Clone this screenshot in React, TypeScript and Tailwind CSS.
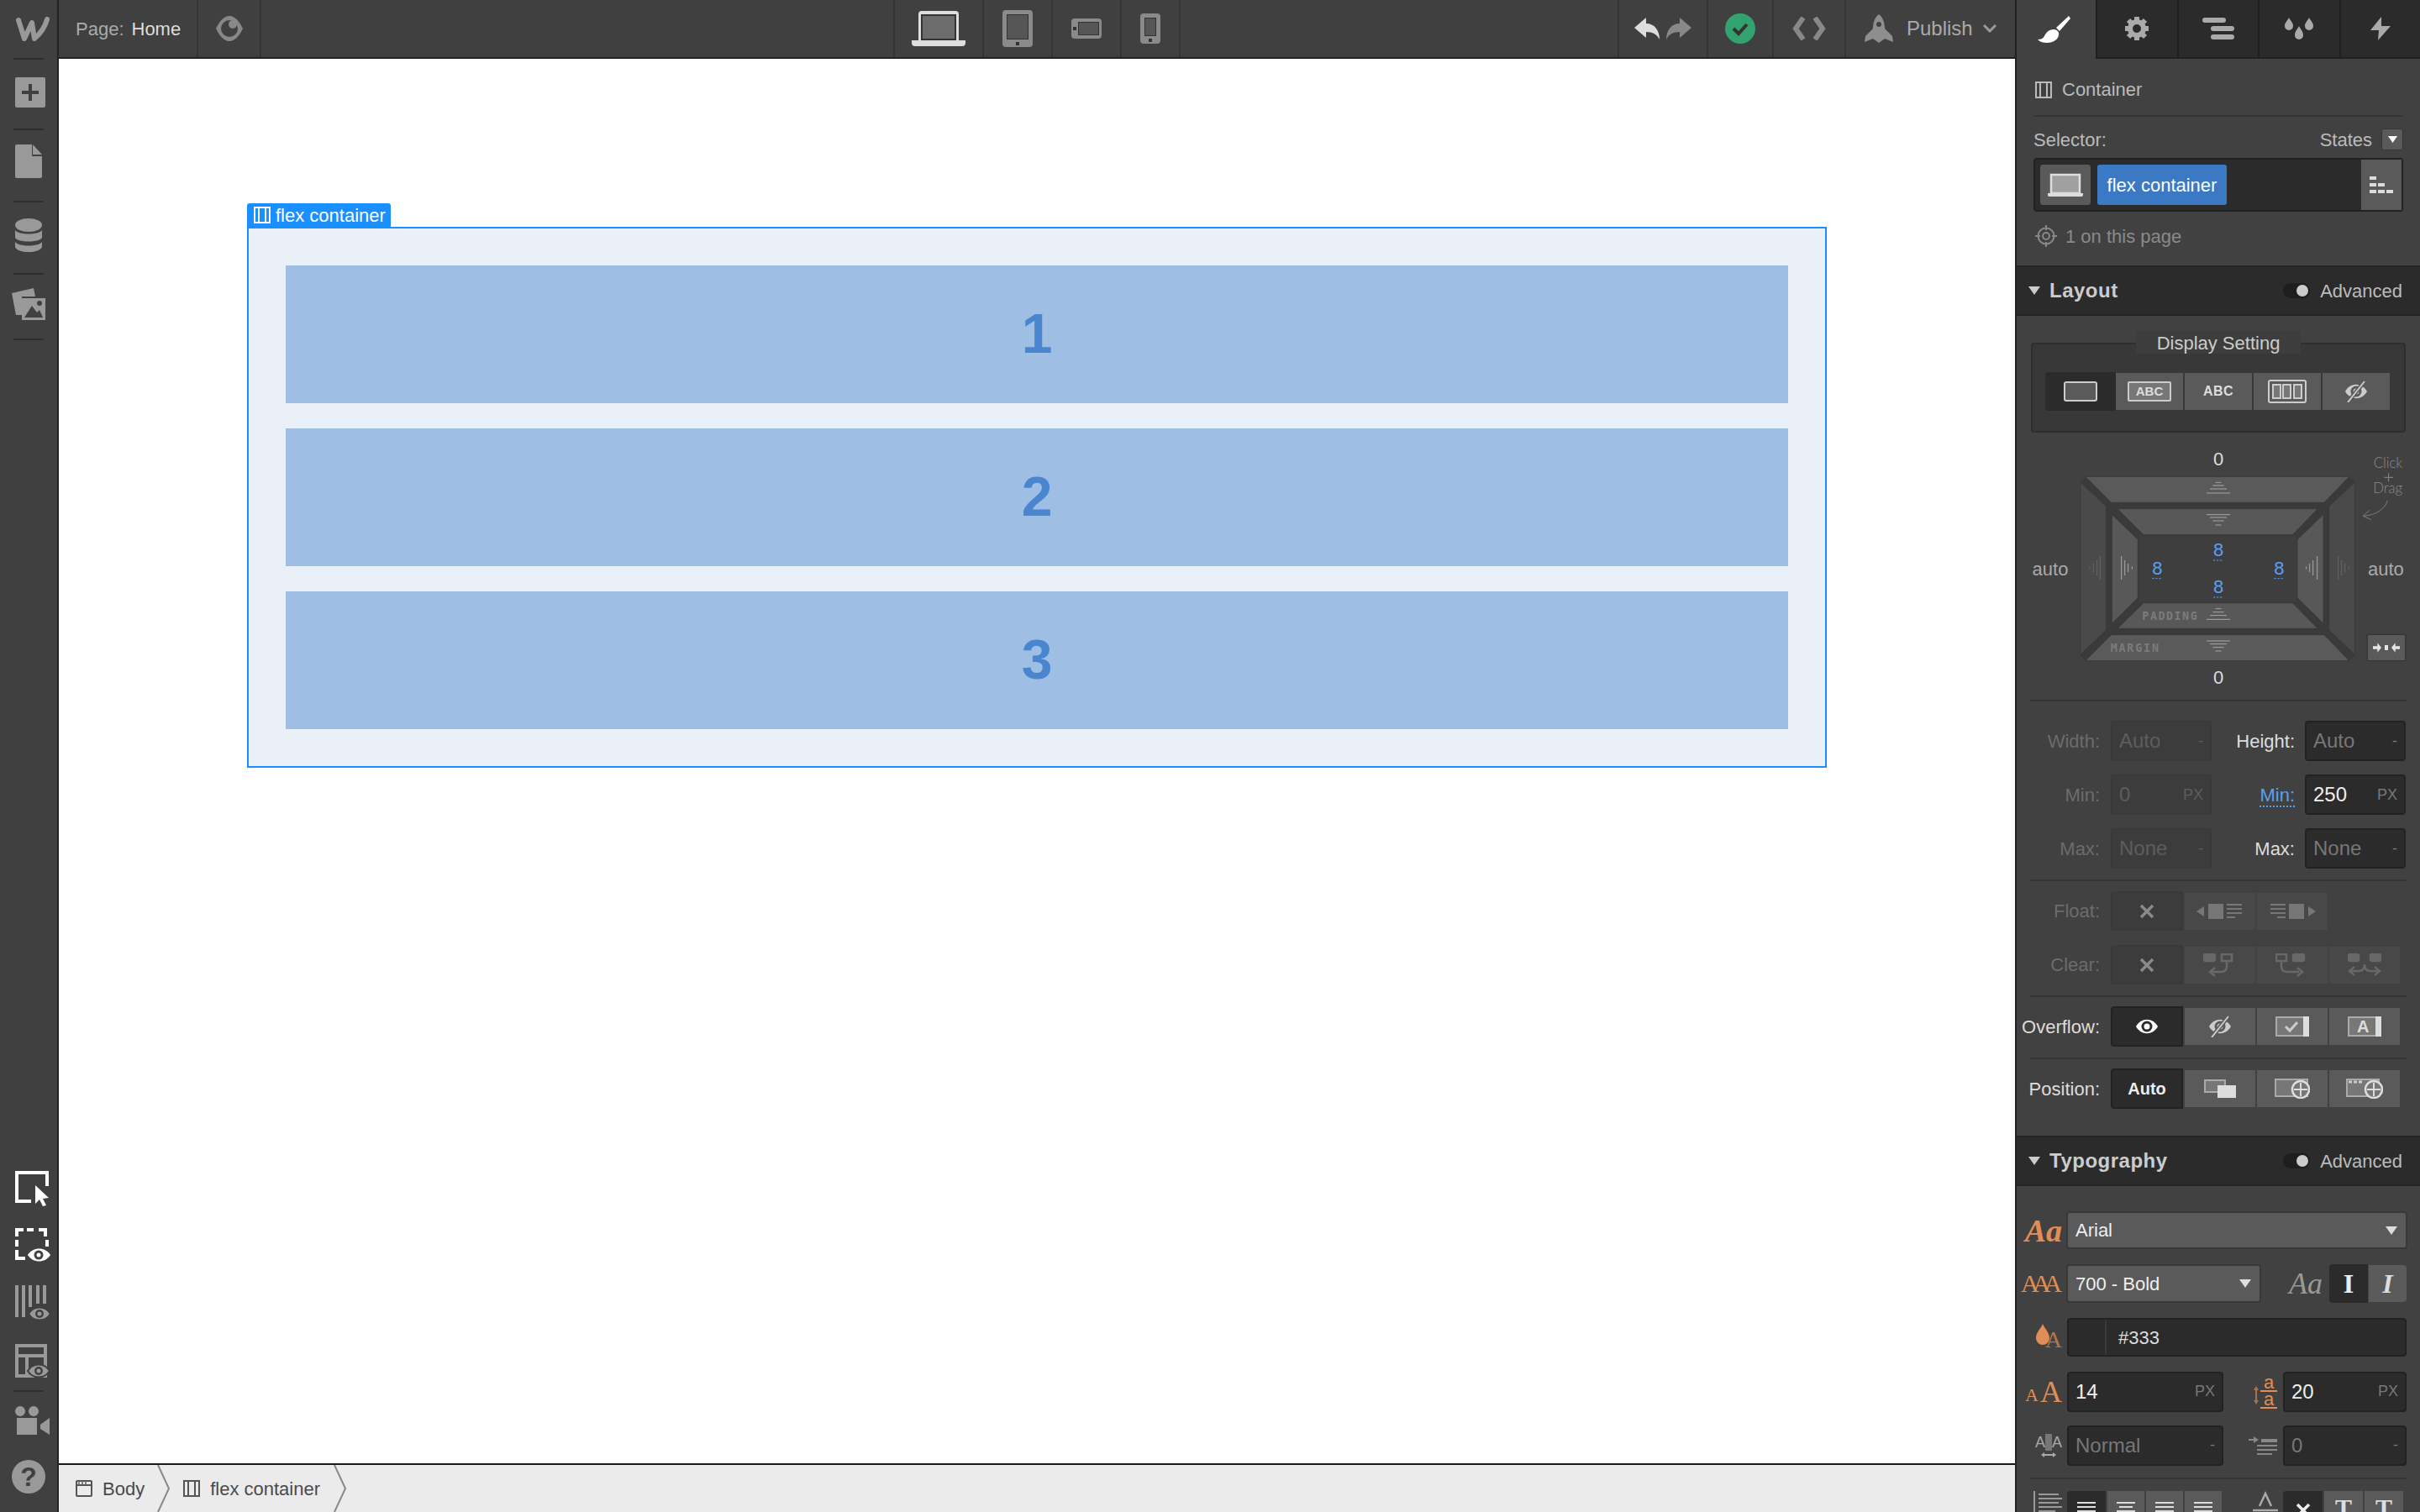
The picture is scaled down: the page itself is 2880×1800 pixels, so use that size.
import type { ReactNode } from 'react';

function Tri({ className = '' }: { className?: string }) {
  return (
    <svg width="14" height="10" viewBox="0 0 14 10" className={className}>
      <path d="M0 0h14L7 10z" fill="currentColor" />
    </svg>
  );
}

function BoxIcon({ color = '#fff', size = 20 }: { color?: string; size?: number }) {
  return (
    <svg width={size} height={size} viewBox="0 0 20 20" fill="none" stroke={color} strokeWidth="2">
      <rect x="1" y="1" width="18" height="18" />
      <path d="M6 1v18M14 1v18" />
    </svg>
  );
}

function Eye({ color = '#ccc', width = 26, slash = false, pupil = '#2b2b2b' }: { color?: string; width?: number; slash?: boolean; pupil?: string }) {
  return (
    <svg width={width} height={width} viewBox="0 0 26 26">
      <path d="M0 13C6 2 20 2 26 13C20 24 6 24 0 13Z" fill={color} />
      <circle cx="13" cy="13" r="6.5" fill={pupil} />
      <circle cx="13" cy="13" r="3.5" fill={color} />
      {slash && <path d="M3 26L23 1" stroke={pupil} strokeWidth="5" />}
      {slash && <path d="M3 26L23 1" stroke={color} strokeWidth="2" />}
    </svg>
  );
}

function Hr({ className = '' }: { className?: string }) {
  return <div className={`h-[2px] bg-[#353535] mx-[16px] ${className}`} />;
}

function RailRule({ className = '' }: { className?: string }) {
  return <div className={`h-[2px] w-[36px] ml-[16px] bg-[#2e2e2e] ${className}`} />;
}

function Rail() {
  return (
    <aside className="w-[70px] h-full shrink-0 bg-[#404040] border-r-[2px] border-[#222] flex flex-col">
      <div className="h-[69px] flex items-center pl-[18px]">
        <svg width="41" height="30" viewBox="0 0 41 30" fill="none" stroke="#999" strokeWidth="6" strokeLinecap="round" strokeLinejoin="round">
          <path d="M4 4L11 26L20 7L23 26C31 19 36 11 38 3" />
        </svg>
      </div>
      <RailRule />
      <div className="h-[82px] flex items-center pl-[18px] pb-[4px]">
        <svg width="36" height="36" viewBox="0 0 36 36">
          <rect width="36" height="36" rx="2" fill="#999" />
          <path d="M16 8h4v8h8v4h-8v8h-4v-8H8v-4h8z" fill="#404040" />
        </svg>
      </div>
      <RailRule />
      <div className="h-[84px] flex items-center pl-[18px] pb-[10px]">
        <svg width="32" height="40" viewBox="0 0 32 40" fill="#999">
          <path d="M0 2a2 2 0 012-2h18v14h12v24a2 2 0 01-2 2H2a2 2 0 01-2-2z" />
          <path d="M21 0l11 12H21z" />
        </svg>
      </div>
      <RailRule />
      <div className="h-[84px] flex items-center pl-[18px] pb-[6px]">
        <svg width="32" height="40" viewBox="0 0 32 40" fill="#999">
          <ellipse cx="16" cy="8" rx="16" ry="8" />
          <path d="M0 14c4 6 28 6 32 0v9c-3 6-29 6-32 0z" />
          <path d="M0 28c4 6 28 6 32 0v6c-3 8-29 8-32 0z" />
        </svg>
      </div>
      <RailRule />
      <div className="h-[76px] flex items-center pl-[14px] pb-[6px]">
        <svg width="40" height="38" viewBox="0 0 40 38">
          <path d="M0 6L26 0l2 10H12v22H5z" fill="#999" />
          <rect x="12" y="12" width="28" height="26" fill="#999" />
          <path d="M15 35l9-14 6 8 3-3 4 9z" fill="#404040" />
          <circle cx="33" cy="18" r="3" fill="#404040" />
        </svg>
      </div>
      <RailRule />
      <div className="mt-auto flex flex-col pl-[18px]">
        <svg width="42" height="42" viewBox="0 0 42 42" fill="none">
          <path d="M19 36H2V2h36v16" stroke="#fff" strokeWidth="4" />
          <path d="M24 17l16 15-7 1 4 8-4 1-4-8-5 5z" fill="#fff" />
        </svg>
        <svg width="42" height="42" viewBox="0 0 42 42" fill="none" className="mt-[26px]">
          <path d="M2 10V2h8M14 2h8M28 2h8v8M38 14v8M2 14v8M2 26v10h10" stroke="#fff" strokeWidth="4" />
          <path d="M15 32C21 22 36 22 42 32C36 42 21 42 15 32Z" fill="#fff" />
          <circle cx="28" cy="32" r="5.5" fill="#404040" />
          <circle cx="28" cy="32" r="2.5" fill="#fff" />
        </svg>
        <svg width="42" height="44" viewBox="0 0 42 44" fill="none" className="mt-[26px]">
          <path d="M2 0v38M10 0v38M18 0v26M27 0v22M35 0v22" stroke="#999" strokeWidth="4" />
          <path d="M16 34C22 24 36 24 42 34C36 44 22 44 16 34Z" fill="#999" stroke="#404040" strokeWidth="2" />
          <circle cx="29" cy="34" r="5" fill="#404040" />
          <circle cx="29" cy="34" r="2.5" fill="#999" />
        </svg>
        <svg width="42" height="42" viewBox="0 0 42 42" fill="none" className="mt-[26px]">
          <path d="M2 2h34v36H2zM2 14h34M14 14v24" stroke="#999" strokeWidth="4" />
          <path d="M15 32C21 22 35 22 41 32C35 42 21 42 15 32Z" fill="#999" stroke="#404040" strokeWidth="2" />
          <circle cx="28" cy="32" r="5" fill="#404040" />
          <circle cx="28" cy="32" r="2.5" fill="#999" />
        </svg>
        <div className="h-[2px] w-[36px] -ml-[2px] mt-[13px] bg-[#2e2e2e]" />
        <svg width="42" height="34" viewBox="0 0 42 34" fill="#999" className="mt-[17px]">
          <circle cx="6" cy="6" r="6" />
          <circle cx="22" cy="6" r="6" />
          <rect x="2" y="14" width="24" height="20" />
          <path d="M30 22l11-8v20l-11-7z" />
        </svg>
        <div className="mt-[30px] mb-[22px] -ml-[4px] w-[40px] h-[40px] rounded-full bg-[#999] flex items-center justify-center text-[#404040] text-[32px] font-bold leading-none">?</div>
      </div>
    </aside>
  );
}

function Cell({ w, children }: { w: string; children: ReactNode }) {
  return <div className={`${w} h-full flex items-center justify-center border-r-[2px] border-[#353535]`}>{children}</div>;
}

function TopBar() {
  return (
    <header className="h-[70px] shrink-0 bg-[#404040] border-b-[2px] border-[#222] grid grid-cols-[1fr_auto_1fr] text-[22px]">
      <div className="flex h-full">
        <div className="w-[166px] h-full flex items-center pl-[20px] border-r-[2px] border-[#353535]">
          <span className="text-[#aaa] mr-[9px]">Page:</span>
          <span className="text-[#ddd]">Home</span>
        </div>
        <div className="w-[75px] h-full flex items-center justify-center border-r-[2px] border-[#353535]">
          <svg width="32" height="32" viewBox="0 0 32 32">
            <path d="M0 16C4 8 9 1 16 1s12 7 16 15c-4 8-9 15-16 15S4 24 0 16Z" fill="#888" />
            <circle cx="16" cy="16" r="10" fill="#404040" />
            <circle cx="20" cy="11" r="5" fill="#888" />
          </svg>
        </div>
      </div>
      <div className="flex h-full border-l-[2px] border-[#353535]">
        <Cell w="w-[106px]">
          <svg width="64" height="44" viewBox="0 0 64 44">
            <path d="M8 36V5a4 4 0 014-4h40a4 4 0 014 4v31z" fill="#ddd" />
            <path d="M0 36h64v3a4 4 0 01-4 4H4a4 4 0 01-4-4z" fill="#ddd" />
            <rect x="11" y="5" width="42" height="31" fill="#333" />
            <rect x="13" y="7" width="38" height="27" fill="#6c6c6c" />
          </svg>
        </Cell>
        <Cell w="w-[82px]">
          <svg width="36" height="44" viewBox="0 0 36 44">
            <rect width="36" height="44" rx="4" fill="#8a8a8a" />
            <rect x="5" y="5" width="26" height="30" fill="#333" />
            <rect x="6" y="6" width="24" height="28" fill="#565656" />
            <rect x="16" y="38" width="4" height="4" fill="#333" />
          </svg>
        </Cell>
        <Cell w="w-[82px]">
          <svg width="36" height="24" viewBox="0 0 36 24">
            <rect width="36" height="24" rx="4" fill="#8a8a8a" />
            <rect x="8" y="4" width="25" height="16" fill="#333" />
            <rect x="9" y="5" width="23" height="14" fill="#565656" />
            <rect x="2" y="10" width="4" height="4" fill="#333" />
          </svg>
        </Cell>
        <Cell w="w-[70px]">
          <svg width="24" height="36" viewBox="0 0 24 36">
            <rect width="24" height="36" rx="4" fill="#8a8a8a" />
            <rect x="5" y="5" width="14" height="22" fill="#333" />
            <rect x="6" y="6" width="12" height="20" fill="#565656" />
            <rect x="10" y="30" width="4" height="4" fill="#333" />
          </svg>
        </Cell>
      </div>
      <div className="flex h-full justify-end">
        <div className="flex h-full border-l-[2px] border-[#353535]">
          <Cell w="w-[106px]">
            <svg width="68" height="26" viewBox="0 0 68 26">
              <path d="M0 12L14 0v7c10 0 16 8 16 19-3-6-8-9-16-9v7z" fill="#ddd" />
              <path d="M68 12L54 0v7c-10 0-16 8-16 19 3-6 8-9 16-9v7z" fill="#888" />
            </svg>
          </Cell>
          <Cell w="w-[78px]">
            <svg width="36" height="36" viewBox="0 0 36 36">
              <circle cx="18" cy="18" r="18" fill="#32a26e" />
              <path d="M10 18l6 6 10-11" fill="none" stroke="#333" strokeWidth="4" />
            </svg>
          </Cell>
          <Cell w="w-[86px]">
            <svg width="40" height="28" viewBox="0 0 40 28" fill="none" stroke="#888" strokeWidth="6">
              <path d="M13 1L4 14l9 13M27 1l9 13-9 13" />
            </svg>
          </Cell>
          <div className="w-[201px] h-full flex items-center pl-[22px] text-[#aaa] text-[24px]">
            <svg width="34" height="34" viewBox="0 0 34 34" className="shrink-0">
              <path d="M17 0c5 4 7 10 7 17l9 9 1 7-10-4-7 5-7-5-10 4 1-7 9-9C10 10 12 4 17 0Z" fill="#8e8e8e" />
              <circle cx="17" cy="12" r="3" fill="#404040" />
            </svg>
            <span className="ml-[16px]">Publish</span>
            <svg width="16" height="10" viewBox="0 0 16 10" fill="none" stroke="#999" strokeWidth="3" className="ml-[12px]">
              <path d="M1 1l7 7 7-7" />
            </svg>
          </div>
        </div>
      </div>
    </header>
  );
}

function Canvas() {
  return (
    <main className="flex-1 bg-white pt-[200px] pl-[224px]">
      <div className="relative w-[1880px] h-[644px] border-[2px] border-[#1a8fff] bg-[#e9f0f8] p-[44px] flex flex-col gap-[30px]">
        <div className="absolute -top-[30px] -left-[2px] w-[171px] h-[30px] rounded-t-[3px] bg-[#1a8fff] flex items-center pl-[8px] pb-[2px] gap-[6px] text-white text-[22px]">
          <BoxIcon />
          <span>flex container</span>
        </div>
        {['1', '2', '3'].map((n) => (
          <div key={n} className="h-[164px] pb-[2px] bg-[#9fbee4] flex items-center justify-center text-[#4a86d0] text-[66px] font-bold leading-none">
            {n}
          </div>
        ))}
      </div>
    </main>
  );
}

function Crumbs() {
  return (
    <footer className="h-[58px] shrink-0 border-t-[2px] border-[#1a1a1a] bg-[#ebebeb] flex items-center text-[22px] text-[#4a4a4a]">
      <svg width="20" height="20" viewBox="0 0 20 20" fill="none" stroke="#555" strokeWidth="2" className="ml-[20px]">
        <rect x="1" y="1" width="18" height="18" rx="1" />
        <path d="M1 6h18M3 3.5h2M7 3.5h2M11 3.5h2" />
      </svg>
      <span className="ml-[12px]">Body</span>
      <svg width="16" height="56" viewBox="0 0 16 56" fill="none" stroke="#888" strokeWidth="2" className="ml-[15px]">
        <path d="M1 0l13 28L1 56" />
      </svg>
      <div className="ml-[15px]"><BoxIcon color="#555" /></div>
      <span className="ml-[12px]">flex container</span>
      <svg width="16" height="56" viewBox="0 0 16 56" fill="none" stroke="#888" strokeWidth="2" className="ml-[16px]">
        <path d="M1 0l13 28L1 56" />
      </svg>
    </footer>
  );
}

function Tabs() {
  const base = 'flex-1 flex items-center justify-center bg-[#2b2b2b] border-b-[2px] border-l-[2px] border-[#202020]';
  return (
    <div className="h-[70px] flex shrink-0">
      <div className="w-[94px] shrink-0 flex items-center justify-center pr-[4px]">
        <svg width="40" height="32" viewBox="0 0 40 32" fill="#fff">
          <path d="M22 14L37 0l2 3-13 15z" />
          <path d="M19 16c4 0 7 3 6 7-1 6-8 9-14 9-4 0-8-1-11-4 4 0 6-1 8-4 2-4 5-8 11-8z" />
        </svg>
      </div>
      <div className={base}>
        <svg width="32" height="32" viewBox="0 0 32 32">
          <path d="M16 2v28M2 16h28M6 6l20 20M26 6L6 26" stroke="#aaa" strokeWidth="6" />
          <circle cx="16" cy="16" r="11" fill="#aaa" />
          <circle cx="16" cy="16" r="5" fill="#2b2b2b" />
        </svg>
      </div>
      <div className={base}>
        <svg width="38" height="26" viewBox="0 0 38 26" fill="#aaa">
          <rect width="28" height="6" rx="3" />
          <rect x="10" y="10" width="28" height="6" rx="3" />
          <rect x="10" y="20" width="28" height="6" rx="3" />
        </svg>
      </div>
      <div className={base}>
        <svg width="34" height="26" viewBox="0 0 34 26" fill="#aaa">
          <path d="M5 0c2 4 5 6 5 10a5 5 0 01-10 0c0-4 3-6 5-10z" />
          <path d="M29 0c2 4 5 6 5 10a5 5 0 01-10 0c0-4 3-6 5-10z" />
          <path d="M17 10c2 4 5 6 5 11a5 5 0 01-10 0c0-5 3-7 5-11z" />
        </svg>
      </div>
      <div className={base}>
        <svg width="24" height="28" viewBox="0 0 24 28" fill="#aaa">
          <path d="M13 0L0 16h10l-1 12 15-17H13z" />
        </svg>
      </div>
    </div>
  );
}

function SectionHead({ title }: { title: string }) {
  return (
    <div className="h-[60px] shrink-0 bg-[#2b2b2b] border-y-[2px] border-[#252525] flex items-center pl-[14px] pr-[21px]">
      <Tri className="text-[#ccc]" />
      <span className="ml-[11px] text-[24px] font-bold tracking-[0.5px] text-[#ccc]">{title}</span>
      <div className="ml-auto w-[32px] h-[18px] rounded-full bg-[#1e1e1e] flex items-center justify-end pr-[2px]">
        <div className="w-[14px] h-[14px] rounded-full bg-[#ccc]" />
      </div>
      <span className="ml-[12px] text-[#bbb]">Advanced</span>
    </div>
  );
}

function BoxModel() {
  const dim = '#686868';
  const lit = '#a8a8a8';
  const digits = [
    [750, 847],
    [532, 912],
    [967, 912],
    [750, 979],
  ];
  return (
    <svg width="480" height="294" viewBox="30 441 1440 882" fill="none" className="mt-[12px] shrink-0">
      <polygon points="275,562 1218,562 1238,582 1238,1198 1218,1220 275,1220 257,1198 257,582" fill="#3a3a3a" />
      <g stroke="#3a3a3a" strokeWidth="3" strokeLinejoin="round">
        <polygon points="275,562 1218,562 1128,655 368,655" fill="#5a5a5a" />
        <polygon points="275,1220 368,1127 1128,1127 1218,1220" fill="#5a5a5a" />
        <polygon points="257,582 350,668 350,1110 257,1198" fill="#4a4a4a" />
        <polygon points="1238,582 1145,668 1145,1110 1238,1198" fill="#4a4a4a" />
        <polygon points="390,677 1105,677 1015,770 483,770" fill="#585858" />
        <polygon points="390,1105 483,1013 1015,1013 1105,1105" fill="#585858" />
        <polygon points="370,697 463,787 463,995 370,1087" fill="#585858" />
        <polygon points="1125,697 1032,787 1032,995 1125,1087" fill="#585858" />
      </g>
      <rect x="467" y="773" width="561" height="237" fill="#3e3e3e" />
      <g stroke={lit} strokeWidth="3">
        <path d="M740 583h20M730 594h40M720 606h60M708 621h84" />
        <path d="M708 698h84M720 708h60M730 720h40M740 735h20" />
        <path d="M740 1034h20M730 1046h40M720 1058h60M708 1072h84" />
        <path d="M708 1149h84M720 1160h60M730 1172h40M740 1185h20" />
        <path d="M404 846v84M416 861v54M428 873v30M442 883v10" />
        <path d="M1064 883v10M1076 873v30M1088 861v54M1103 846v84" />
      </g>
      <g stroke={dim} strokeWidth="3">
        <path d="M290 883v10M304 873v30M317 861v54M328 846v84" />
        <path d="M1178 846v84M1190 861v54M1202 873v30M1216 883v10" />
      </g>
      <g fontFamily="'Liberation Sans', Arial, sans-serif" fontSize="66" textAnchor="middle">
        {digits.map(([x, y]) => (
          <g key={`${x}-${y}`}>
            <text x={x} y={y} fill="#5aa0f0" stroke="none">8</text>
            <path d={`M${x - 18} ${y + 14}h36`} stroke="#5aa0f0" strokeWidth="3" strokeDasharray="7 5" />
          </g>
        ))}
        <text x="750" y="523" fill="#ddd">0</text>
        <text x="750" y="1303" fill="#ddd">0</text>
        <text x="150" y="914" fill="#aaa">auto</text>
        <text x="1348" y="914" fill="#aaa">auto</text>
      </g>
      <g fontFamily="'DejaVu Sans Mono', monospace" fontSize="40" fill="#7c7c7c" fontWeight="700">
        <text x="478" y="1073" letterSpacing="4.6">PADDING</text>
        <text x="365" y="1187" letterSpacing="5.5">MARGIN</text>
      </g>
      <g fontFamily="Lato, sans-serif" fontWeight="300" fontSize="50" fill="#8a8a8a" textAnchor="middle">
        <text x="1356" y="530">Click</text>
        <text x="1355" y="622">Drag</text>
      </g>
      <path d="M1358 550v30M1342 565h32" stroke="#8a8a8a" strokeWidth="3" />
      <path d="M1354 648C1345 680 1310 700 1268 703M1290 682L1266 703L1296 716" stroke="#7d7d7d" strokeWidth="3" />
      <rect x="1282" y="1126" width="136" height="94" rx="6" fill="#5a5a5a" stroke="#353535" strokeWidth="4" />
      <path d="M1302 1168h16v-12l14 17-14 17v-12h-16zM1398 1168h-16v-12l-14 17 14 17v-12h16z" fill="#e5e5e5" />
      <rect x="1344" y="1164" width="12" height="18" fill="#e5e5e5" />
    </svg>
  );
}

function Field({ value, unit, active = false, dim = false, w = 'w-[120px]' }: { value: string; unit: string; active?: boolean; dim?: boolean; w?: string }) {
  const box = active ? 'bg-[#2b2b2b] border-[#222]' : 'bg-[#3c3c3c] border-[#3a3a3a]';
  const tone = dim ? (active ? 'text-[#777]' : 'text-[#5d5d5d]') : 'text-[#eee]';
  const unitTone = active ? 'text-[#777]' : 'text-[#5d5d5d]';
  return (
    <div className={`${w} h-[48px] rounded-[4px] border-[2px] ${box} flex items-center justify-between pl-[8px] pr-[8px] shrink-0`}>
      <span className={`${tone} text-[24px]`}>{value}</span>
      <span className={`${unitTone} text-[18px]`}>{unit}</span>
    </div>
  );
}

function Label({ text, tone, w = 'w-[99px]' }: { text: string; tone: string; w?: string }) {
  return <span className={`${w} shrink-0 text-right ${tone}`}>{text}</span>;
}

function Seg({ items, dim = false, h = 'h-[47px]' }: { items: ReactNode[]; dim?: boolean; h?: string }) {
  const off = dim ? 'bg-[#484848]' : 'bg-[#5a5a5a]';
  const on = dim ? 'bg-[#3c3c3c] border-[#3a3a3a]' : 'bg-[#2b2b2b] border-[#222]';
  return (
    <div className={`flex ${h}`}>
      {items.map((it, i) =>
        i === 0 ? (
          <div key={i} className={`w-[86px] h-full rounded-l-[4px] border-[2px] ${on} flex items-center justify-center`}>{it}</div>
        ) : (
          <div key={i} className={`w-[84px] h-[44px] mt-[1.5px] ml-[2px] ${off} flex items-center justify-center`}>{it}</div>
        ),
      )}
    </div>
  );
}

const Cross = ({ color = '#999' }: { color?: string }) => (
  <svg width="18" height="18" viewBox="0 0 18 18" stroke={color} strokeWidth="3.5"><path d="M2 2l14 14M16 2L2 16" /></svg>
);

function FloatIcon({ flip = false }: { flip?: boolean }) {
  return (
    <svg width="56" height="20" viewBox="0 0 56 20" fill="#777" className={flip ? '-scale-x-100' : ''}>
      <path d="M0 10l9-6v12z" />
      <rect x="14" y="1" width="18" height="18" />
      <path d="M36 2h18M36 7h18M36 12h18M36 17h10" stroke="#777" strokeWidth="2" />
    </svg>
  );
}

function ClearIcon({ kind }: { kind: 'l' | 'r' | 'b' }) {
  const c = '#686868';
  return (
    <svg width="40" height="28" viewBox="0 0 40 28" fill="none" stroke={c} strokeWidth="2.5">
      {kind === 'l' && (<><rect x="1" y="1" width="13" height="8" rx="2" fill={c} /><rect x="22" y="1" width="12" height="8" /><path d="M28 9v6q0 7-7 7H10M14 17l-6 5 6 5" /></>)}
      {kind === 'r' && (<><rect x="1" y="1" width="12" height="8" /><rect x="21" y="1" width="13" height="8" rx="2" fill={c} /><path d="M7 9v6q0 7 7 7h14M26 17l6 5-6 5" /></>)}
      {kind === 'b' && (<><rect x="1" y="1" width="12" height="8" rx="2" fill={c} /><rect x="27" y="1" width="12" height="8" rx="2" fill={c} /><path d="M3 21h10q7 0 7-8 0 8 7 8h10M8 16l-6 5 6 5M32 16l6 5-6 5" /></>)}
    </svg>
  );
}

function TypeRowIcon({ w, children }: { w: string; children: ReactNode }) {
  return <div className={`${w} shrink-0 flex items-center justify-end text-[#e08e55] font-['Liberation_Serif',serif] leading-none relative`}>{children}</div>;
}

function Inspector() {
  const serif = "font-['Liberation_Serif',serif]";
  return (
    <section className="w-[482px] h-full shrink-0 border-l-[2px] border-[#222] bg-[#414141] flex flex-col overflow-hidden text-[22px] text-[#bbb]">
      <Tabs />
      <div className="h-[67px] shrink-0 flex items-center pl-[22px] pt-[6px]">
        <BoxIcon color="#bbb" />
        <span className="ml-[12px]">Container</span>
      </div>
      <div className="h-[2px] mx-[20px] bg-[#353535] shrink-0" />
      <div className="mt-[14px] h-[26px] shrink-0 flex items-center px-[20px]">
        <span>Selector:</span>
        <span className="ml-auto">States</span>
        <div className="ml-[11px] w-[26px] h-[26px] rounded-[3px] bg-[#5a5a5a] border border-[#353535] flex items-center justify-center">
          <Tri className="text-white w-[11px] h-[8px]" />
        </div>
      </div>
      <div className="mt-[9px] mx-[20px] h-[64px] shrink-0 rounded-[4px] bg-[#2b2b2b] border-[2px] border-[#222] flex items-center pl-[6px]">
        <div className="w-[60px] h-[48px] rounded-[3px] bg-[#5a5a5a] flex items-center justify-center">
          <svg width="42" height="28" viewBox="0 0 42 28">
            <path d="M4 24V2h34v22z" fill="#a0a0a0" stroke="#ddd" strokeWidth="2.5" />
            <path d="M0 24h42v2a2 2 0 01-2 2H2a2 2 0 01-2-2z" fill="#ddd" />
          </svg>
        </div>
        <div className="ml-[8px] w-[154px] h-[48px] rounded-[3px] bg-[#3b79c5] text-white flex items-center justify-center">flex container</div>
        <div className="ml-auto w-[48px] self-stretch bg-[#5a5a5a] flex items-center justify-center">
          <svg width="28" height="20" viewBox="0 0 28 20" fill="#ddd">
            <rect width="8" height="4" />
            <rect y="8" width="8" height="4" />
            <rect x="10" y="8" width="8" height="4" />
            <rect y="16" width="8" height="4" />
            <rect x="10" y="16" width="8" height="4" />
            <rect x="20" y="16" width="8" height="4" />
          </svg>
        </div>
      </div>
      <div className="mt-[17px] h-[24px] shrink-0 flex items-center pl-[22px] text-[#8a8a8a]">
        <svg width="26" height="26" viewBox="0 0 26 26" fill="none" stroke="#888" strokeWidth="2">
          <circle cx="13" cy="13" r="9.5" />
          <circle cx="13" cy="13" r="4" />
          <path d="M13 0v6M13 20v6M0 13h6M20 13h6" />
        </svg>
        <span className="ml-[10px]">1 on this page</span>
      </div>
      <div className="mt-[23px]"><SectionHead title="Layout" /></div>

      <div className="relative mt-[32px] mx-[17px] h-[107px] shrink-0 rounded-[4px] bg-[#383838] border-[2px] border-[#2e2e2e] pt-[34px] pl-[15px] flex">
        <div className="absolute -top-[15px] left-[123px] w-[196px] h-[26px] bg-[#3d3d3d] flex items-center justify-center text-[#ccc]">Display Setting</div>
        <div className="w-[84px] h-[46px] -mt-[1px] rounded-l-[4px] bg-[#2b2b2b] flex items-center justify-center">
          <svg width="40" height="24" viewBox="0 0 40 24"><rect x="1" y="1" width="38" height="22" rx="2" fill="#5a5a5a" stroke="#ccc" strokeWidth="2" /></svg>
        </div>
        <div className="w-[80px] h-[44px] bg-[#5a5a5a] flex items-center justify-center">
          <div className="w-[52px] h-[24px] rounded-[2px] border-[2px] border-[#ccc] bg-[#777] flex items-center justify-center text-[15px] font-bold text-[#ddd]">ABC</div>
        </div>
        <div className="ml-[2px] w-[80px] h-[44px] bg-[#5a5a5a] flex items-center justify-center text-[16px] font-bold text-[#ddd] tracking-[0.5px]">ABC</div>
        <div className="ml-[2px] w-[80px] h-[44px] bg-[#5a5a5a] flex items-center justify-center">
          <svg width="46" height="28" viewBox="0 0 46 28" fill="#777" stroke="#ccc" strokeWidth="2">
            <rect x="1" y="1" width="44" height="26" rx="2" fill="none" />
            <rect x="6" y="6" width="9" height="16" />
            <rect x="18" y="6" width="9" height="16" />
            <rect x="31" y="6" width="9" height="16" />
          </svg>
        </div>
        <div className="ml-[2px] w-[80px] h-[44px] bg-[#5a5a5a] flex items-center justify-center">
          <Eye color="#ccc" pupil="#5a5a5a" slash />
        </div>
      </div>

      <BoxModel />
      <Hr className="mt-[12px] shrink-0" />

      <div className="mt-[23px] flex flex-col gap-[16px] shrink-0">
        <div className="flex items-center">
          <Label text="Width:" tone="text-[#6c6c6c]" />
          <div className="ml-[13px]"><Field value="Auto" unit="-" dim /></div>
          <Label text="Height:" tone="text-[#ddd]" />
          <div className="ml-[12px]"><Field value="Auto" unit="-" active dim /></div>
        </div>
        <div className="flex items-center">
          <Label text="Min:" tone="text-[#6c6c6c]" />
          <div className="ml-[13px]"><Field value="0" unit="PX" dim /></div>
          <div className="w-[99px] shrink-0 text-right"><span className="text-[#5aa0f0] border-b-[2px] border-dotted border-[#5aa0f0]">Min:</span></div>
          <div className="ml-[12px]"><Field value="250" unit="PX" active /></div>
        </div>
        <div className="flex items-center">
          <Label text="Max:" tone="text-[#6c6c6c]" />
          <div className="ml-[13px]"><Field value="None" unit="-" dim /></div>
          <Label text="Max:" tone="text-[#ddd]" />
          <div className="ml-[12px]"><Field value="None" unit="-" active dim /></div>
        </div>
      </div>
      <Hr className="mt-[13px] shrink-0" />
      <div className="mt-[12px] flex items-center shrink-0">
        <Label text="Float:" tone="text-[#6c6c6c]" />
        <div className="ml-[13px]"><Seg dim items={[<Cross key="x" color="#8a8a8a" />, <FloatIcon key="l" />, <FloatIcon key="r" flip />]} /></div>
      </div>
      <div className="mt-[17px] flex items-center shrink-0">
        <Label text="Clear:" tone="text-[#6c6c6c]" />
        <div className="ml-[13px]"><Seg dim items={[<Cross key="x" color="#8a8a8a" />, <ClearIcon key="l" kind="l" />, <ClearIcon key="r" kind="r" />, <ClearIcon key="b" kind="b" />]} /></div>
      </div>
      <Hr className="mt-[13px] shrink-0" />
      <div className="mt-[11px] flex items-center shrink-0">
        <Label text="Overflow:" tone="text-[#ddd]" />
        <div className="ml-[13px]">
          <Seg
            h="h-[48px]"
            items={[
              <Eye key="v" color="#fff" />,
              <Eye key="h" color="#ccc" pupil="#5a5a5a" slash />,
              <svg key="s" width="40" height="24" viewBox="0 0 40 24">
                <rect x="1" y="1" width="38" height="22" fill="#777" stroke="#aaa" strokeWidth="2" />
                <rect x="33" y="0" width="7" height="24" fill="#ddd" />
                <path d="M12 12l5 5 9-10" fill="none" stroke="#ccc" strokeWidth="3" />
              </svg>,
              <div key="a" className="relative w-[40px] h-[24px] bg-[#777] border-[2px] border-[#aaa] text-[#ddd] text-[20px] font-bold leading-[20px] pl-[9px]">
                A
                <div className="absolute -right-[2px] -top-[2px] w-[7px] h-[24px] bg-[#ddd]" />
              </div>,
            ]}
          />
        </div>
      </div>
      <Hr className="mt-[13px] shrink-0" />
      <div className="mt-[11px] flex items-center shrink-0">
        <Label text="Position:" tone="text-[#ddd]" />
        <div className="ml-[13px]">
          <Seg
            h="h-[48px]"
            items={[
              <span key="a" className="font-bold text-[20px] text-[#eee]">Auto</span>,
              <svg key="r" width="38" height="22" viewBox="0 0 38 22">
                <rect x="1" y="1" width="24" height="14" fill="#777" stroke="#aaa" strokeWidth="2" />
                <rect x="16" y="7" width="22" height="15" fill="#ddd" />
              </svg>,
              <svg key="b" width="42" height="24" viewBox="0 0 42 24">
                <rect x="1" y="1" width="38" height="20" fill="#777" stroke="#aaa" strokeWidth="2" />
                <circle cx="31" cy="13" r="10" fill="#777" stroke="#ddd" strokeWidth="2.5" />
                <path d="M31 5v16M23 13h16" stroke="#ddd" strokeWidth="2" />
              </svg>,
              <svg key="f" width="44" height="24" viewBox="0 0 44 24">
                <rect x="1" y="1" width="38" height="20" fill="#777" stroke="#aaa" strokeWidth="2" />
                <path d="M3 4h4M9 4h4M15 4h4" stroke="#ccc" strokeWidth="3" />
                <circle cx="33" cy="13" r="10" fill="#777" stroke="#ddd" strokeWidth="2.5" />
                <path d="M33 5v16M25 13h16" stroke="#ddd" strokeWidth="2" />
              </svg>,
            ]}
          />
        </div>
      </div>

      <div className="mt-[32px]"><SectionHead title="Typography" /></div>

      <div className="mt-[30px] h-[45px] flex items-center shrink-0">
        <TypeRowIcon w="w-[54px]"><span className="text-[38px] italic font-bold">Aa</span></TypeRowIcon>
        <div className="ml-[5px] w-[406px] h-[45px] rounded-[4px] bg-[#5a5a5a] border-[2px] border-[#383838] flex items-center justify-between pl-[9px] pr-[10px] text-[#eee]">
          <span>Arial</span>
          <Tri className="text-[#ddd]" />
        </div>
      </div>
      <div className="mt-[18px] h-[46px] flex items-center shrink-0">
        <TypeRowIcon w="w-[54px]">
          <span className="text-[30px] tracking-[-8px] pr-[8px] whitespace-nowrap">AAA</span>
        </TypeRowIcon>
        <div className="ml-[5px] w-[232px] h-[46px] rounded-[4px] bg-[#5a5a5a] border-[2px] border-[#383838] flex items-center justify-between pl-[9px] pr-[10px] text-[#eee]">
          <span>700 - Bold</span>
          <Tri className="text-[#ddd]" />
        </div>
        <span className={`ml-[33px] w-[44px] text-[36px] italic text-[#999] ${serif}`}>Aa</span>
        <div className={`ml-[4px] w-[46px] h-[46px] rounded-l-[4px] bg-[#2b2b2b] flex items-center justify-center text-[32px] font-bold text-[#eee] ${serif}`}>I</div>
        <div className={`ml-[1px] w-[45px] h-[44px] rounded-r-[4px] bg-[#5a5a5a] flex items-center justify-center text-[32px] font-bold italic text-[#ddd] ${serif}`}>I</div>
      </div>
      <div className="mt-[18px] h-[46px] flex items-center shrink-0">
        <TypeRowIcon w="w-[54px]">
          <svg width="16" height="26" viewBox="0 0 16 26" fill="#e08e55" className="-mt-[6px]">
            <path d="M8 0c3 7 8 10 8 17a8 8 0 01-16 0C0 10 5 7 8 0z" />
          </svg>
          <span className="text-[28px] opacity-70 -ml-[5px] mt-[6px]">A</span>
        </TypeRowIcon>
        <div className="ml-[6px] w-[404px] h-[46px] rounded-[4px] bg-[#2b2b2b] border-[2px] border-[#222] flex items-center text-[#ddd]">
          <div className="w-[45px] h-full border-r-[2px] border-[#3a3a3a]" />
          <span className="ml-[14px]">#333</span>
        </div>
      </div>
      <div className="mt-[18px] h-[47px] flex items-center shrink-0">
        <TypeRowIcon w="w-[54px]">
          <span className="text-[22px] mt-[8px]">A</span>
          <span className="text-[36px] ml-[2px]">A</span>
        </TypeRowIcon>
        <div className="ml-[6px]"><Field value="14" unit="PX" active w="w-[186px]" /></div>
        <svg width="6" height="22" viewBox="0 0 6 22" fill="#a8714b" className="ml-[36px] mt-[8px] shrink-0">
          <path d="M3 0l3 5H4v12h2l-3 5-3-5h2V5H0z" />
        </svg>
        <div className="ml-[2px] w-[20px] flex flex-col items-center text-[#e08e55] text-[22px] leading-[18px] shrink-0">
          <span className="border-b-[2px] border-[#e08e55] w-full text-center">a</span>
          <span className="border-b-[2px] border-[#e08e55] w-full text-center">a</span>
        </div>
        <div className="ml-[7px]"><Field value="20" unit="PX" active w="w-[147px]" /></div>
      </div>
      <div className="mt-[17px] h-[47px] flex items-center shrink-0">
        <TypeRowIcon w="w-[54px]">
          <div className="flex flex-col items-center text-[#aaa]">
            <div className="flex items-center text-[18px] leading-none font-['Liberation_Sans',sans-serif]">
              <span>A</span><div className="w-[8px] h-[20px] bg-[#777]" /><span>A</span>
            </div>
            <svg width="18" height="6" viewBox="0 0 18 6" fill="#aaa" className="mt-[2px]"><path d="M0 3l4-3v2h10V0l4 3-4 3V4H4v2z" /></svg>
          </div>
        </TypeRowIcon>
        <div className="ml-[6px]"><Field value="Normal" unit="-" active dim w="w-[186px]" /></div>
        <div className="ml-[30px] w-[34px] shrink-0">
          <svg width="34" height="24" viewBox="0 0 34 24" fill="#888">
            <path d="M0 4h6V1l6 4-6 4V6H0z" />
            <rect x="15" y="4" width="19" height="4" />
            <path d="M10 11h24v2H10zM10 16h24v2H10zM10 21h18v2H10z" />
          </svg>
        </div>
        <div className="ml-[7px]"><Field value="0" unit="-" active dim w="w-[147px]" /></div>
      </div>
      <Hr className="mt-[15px] shrink-0" />
      <div className="mt-[14px] flex items-start shrink-0">
        <svg width="34" height="30" viewBox="0 0 34 30" fill="none" stroke="#999" strokeWidth="2" className="ml-[20px] shrink-0">
          <path d="M1 0v30M6 4h24M6 9h28M6 14h24M6 19h28M6 24h20" />
        </svg>
        <div className="ml-[6px] flex h-[47px]">
          {[0, 1, 2, 3].map((i) => (
            <div key={i} className={`${i === 0 ? 'w-[46px] bg-[#2b2b2b] rounded-l-[4px]' : 'w-[44px] ml-[2px] bg-[#5a5a5a]'} flex flex-col items-center gap-[3px] pt-[13px]`}>
              {[0, 1, 2].map((j) => (
                <div key={j} className={`h-[2px] ${j === 1 && i === 1 ? 'w-[16px]' : 'w-[22px]'} bg-[#ddd]`} />
              ))}
            </div>
          ))}
        </div>
        <div className="ml-[37px] w-[30px] shrink-0">
          <svg width="30" height="30" viewBox="0 0 30 30" fill="none" stroke="#aaa" strokeWidth="2.5"><path d="M8 18L15 3l7 15M0 23h30" /></svg>
        </div>
        <div className="ml-[6px] flex h-[47px]">
          <div className="w-[47px] bg-[#2b2b2b] rounded-l-[4px] flex justify-center pt-[14px]"><Cross color="#eee" /></div>
          <div className={`ml-[2px] w-[46px] h-[25px] overflow-hidden bg-[#5a5a5a] text-center text-[30px] font-bold text-[#ddd] leading-[40px] ${serif}`}>T</div>
          <div className={`ml-[2px] w-[46px] h-[25px] overflow-hidden bg-[#5a5a5a] text-center text-[30px] font-bold text-[#ddd] leading-[40px] ${serif}`}>T</div>
        </div>
      </div>
    </section>
  );
}

export default function App() {
  return (
    <div className="flex w-[2880px] h-[1800px] overflow-hidden font-['Liberation_Sans',Arial,sans-serif]">
      <Rail />
      <div className="flex-1 min-w-0 h-full flex flex-col">
        <TopBar />
        <Canvas />
        <Crumbs />
      </div>
      <Inspector />
    </div>
  );
}
